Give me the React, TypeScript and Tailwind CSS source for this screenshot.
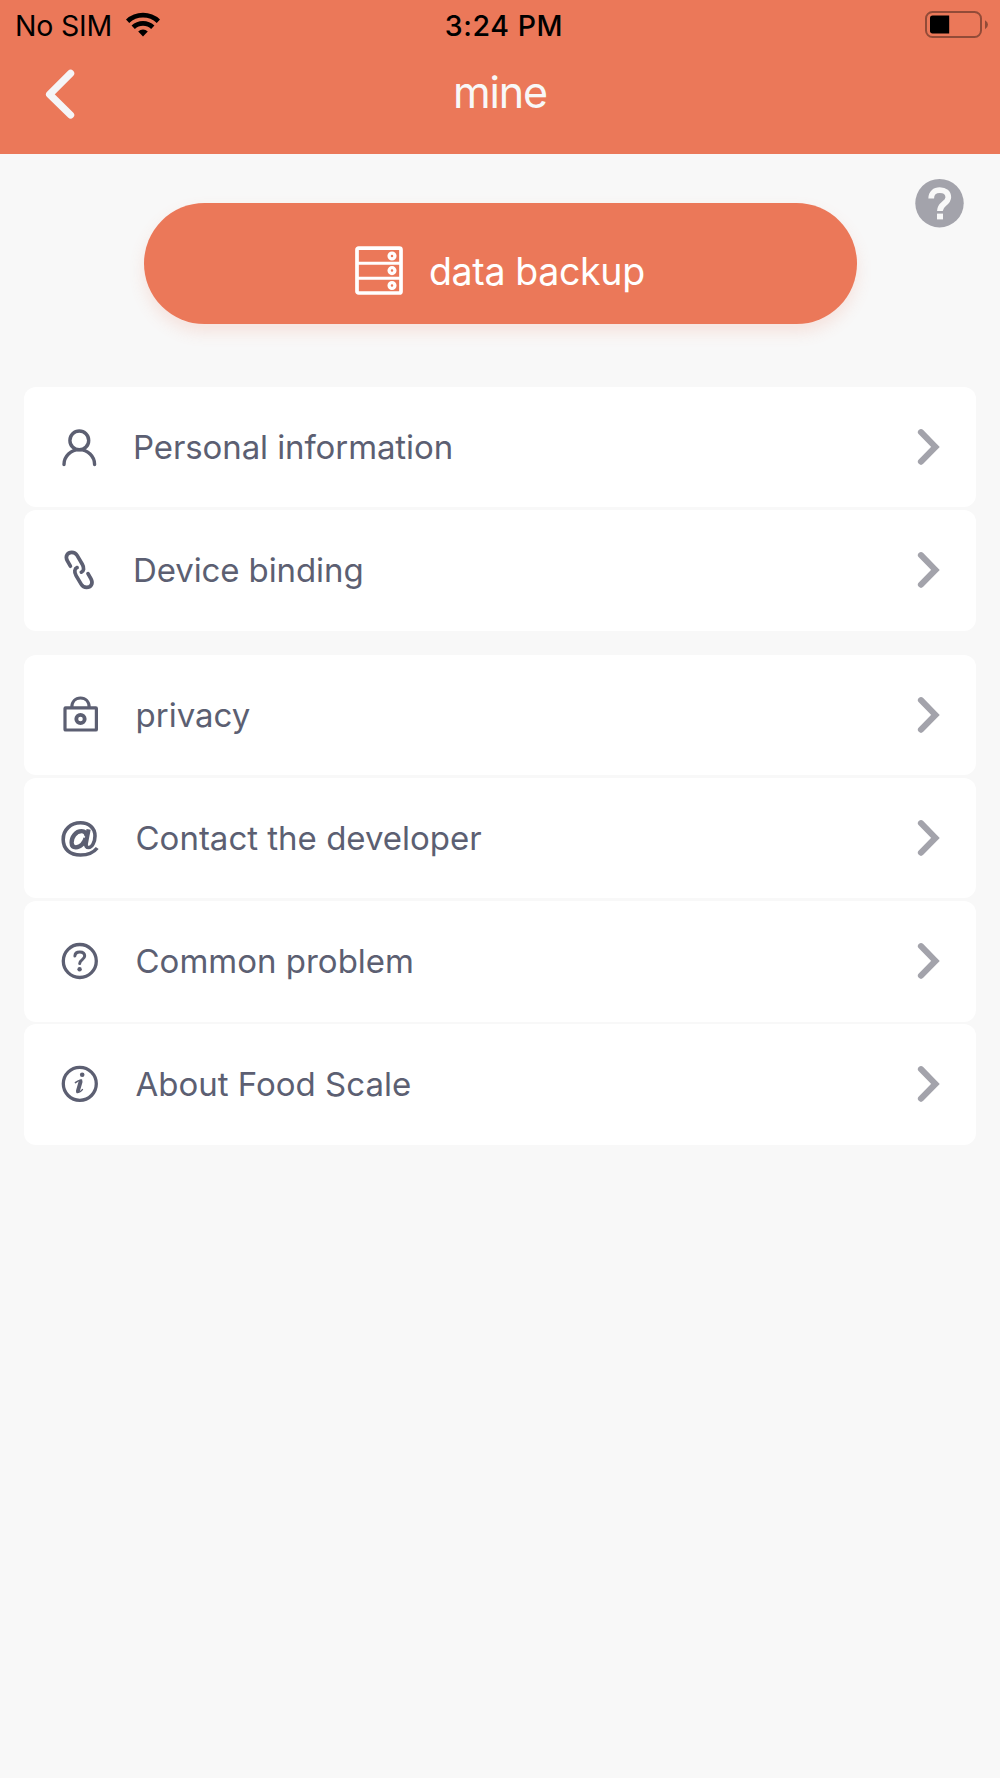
import type { ReactNode } from "react";

type MenuEntry = {
  id: string;
  label: string;
  icon: ReactNode;
};

type MenuGroup = {
  id: string;
  labelClass: string;
  items: MenuEntry[];
};

const PersonIcon = () => (
  <svg className="w-10 h-10" viewBox="0 0 40 40" fill="none" stroke="currentColor" strokeWidth={3.4} strokeLinecap="round">
    <circle cx="19.3" cy="13.4" r="9.4" />
    <path d="M4 37.5A15.3 14.9 0 0 1 34.6 37.5" />
  </svg>
);

const LinkIcon = () => {
  const half = "M10.4 16.2L7.4 10.9C4.7 6 7.8 2.4 11.8 2.4C14.3 2.4 16 3.6 17.1 5.4L22.3 14.2C24.4 17.8 23.9 21.2 21.3 22.2";
  return (
    <svg className="w-10 h-10" viewBox="0 0 40 40" fill="none" stroke="currentColor" strokeWidth={3.7} strokeLinecap="round">
      <path d={half} />
      <path d={half} transform="rotate(180 19.2 19.9)" />
    </svg>
  );
};

const LockIcon = () => (
  <svg className="w-10 h-10" viewBox="0 0 40 40" fill="none" stroke="currentColor" strokeWidth={3.2} strokeLinejoin="round">
    <rect x="5" y="12.8" width="31.4" height="22.2" rx="0.6" />
    <path d="M11.8 12.5C11.8 6.5 15.5 3 20.5 3S29.2 6.5 29.2 12.5" />
    <circle cx="20.5" cy="24" r="4.2" strokeWidth={3.8} />
  </svg>
);

const AtIcon = () => (
  <svg className="w-10 h-10" viewBox="0 0 40 40" fill="none" stroke="currentColor" strokeWidth={3.6}>
    <path d="M37.2 30C33.3 35 27 37 20.5 37C10 37 3.2 31 3.2 21.5C3.2 11.5 11 4.8 20.5 4.8C29 4.8 35 10 35 18C35 24 32 29.5 28.6 29.5C26.4 29.5 25.6 28 26.1 25.8" />
    <path d="M28.6 11.3L25.4 28" strokeWidth={4.2} />
    <path d="M26.6 18C26.2 14.6 24.3 13.2 21.6 13.2C15.6 13.2 11.6 19 11.6 24.5C11.6 27.9 13.1 29.3 15.8 29.3C20.5 29.3 24.5 25 25.6 20" strokeWidth={4.3} />
  </svg>
);

const QuestionIcon = () => (
  <svg className="w-10 h-10" viewBox="0 0 40 40" fill="none" stroke="currentColor" strokeWidth={3.3}>
    <circle cx="19.8" cy="20" r="16.5" />
    <path d="M14.9 15C15 12.4 17 11 19.8 11C22.6 11 24.7 12.5 24.7 15.1C24.7 18.7 19.7 18.6 19.7 22.6" strokeWidth={3} strokeLinecap="round" />
    <circle cx="19.6" cy="28.2" r="2.2" fill="currentColor" stroke="none" />
  </svg>
);

const InfoIcon = () => (
  <svg className="w-10 h-10" viewBox="0 0 40 40" fill="none" stroke="currentColor" strokeWidth={3.3}>
    <circle cx="19.8" cy="19.8" r="16.5" />
    <circle cx="22.2" cy="10.8" r="2.3" fill="currentColor" stroke="none" />
    <path d="M20.6 17.6L17.9 27" strokeWidth={3.9} strokeLinecap="round" />
    <path d="M15.4 18.6Q18 16.2 21.5 15.9M17 28.5Q19.6 29.2 22.4 25.6" strokeWidth={1.5} strokeLinecap="round" />
  </svg>
);

const menuGroups: MenuGroup[] = [
  {
    id: "account",
    labelClass: "ml-[33px] tracking-[-0.1px]",
    items: [
      { id: "personal", label: "Personal information", icon: <PersonIcon /> },
      { id: "device", label: "Device binding", icon: <LinkIcon /> },
    ],
  },
  {
    id: "support",
    labelClass: "ml-[35.5px]",
    items: [
      { id: "privacy", label: "privacy", icon: <LockIcon /> },
      { id: "contact", label: "Contact the developer", icon: <AtIcon /> },
      { id: "problem", label: "Common problem", icon: <QuestionIcon /> },
      { id: "about", label: "About Food Scale", icon: <InfoIcon /> },
    ],
  },
];

function StatusBar() {
  return (
    <div className="grid grid-cols-3 items-center h-[50px] pl-[15px] pr-3 text-black text-[28.5px] leading-none">
      <div className="flex items-center gap-[13.5px]">
        <span className="pt-[2px] tracking-[-0.2px]">No SIM</span>
        <svg className="w-[34px] h-[26px]" viewBox="0 0 34 26" fill="none" stroke="currentColor" strokeWidth={4.8}>
          <path d="M1.6 9.2A22.5 22.5 0 0 1 32.4 9.2" />
          <path d="M7.2 15.2A14.3 14.3 0 0 1 26.8 15.2" />
          <path d="M12.2 19.4A7.2 7.2 0 0 1 21.8 19.4L17 24.6Z" fill="currentColor" stroke="none" />
        </svg>
      </div>
      <span className="justify-self-center pt-[2px] pl-[5px] font-medium tracking-[0.6px]">3:24 PM</span>
      <svg className="w-[63px] h-7 justify-self-end" viewBox="0 0 63 28">
        <rect x="1" y="1" width="55" height="25" rx="6.5" fill="none" stroke="#924b38" strokeWidth="2" />
        <path d="M7.6 4.4H24.2V22.4H7.6Q5 22.4 5 19.8V7Q5 4.4 7.6 4.4Z" fill="black" />
        <path d="M60 9.2Q63 10.9 63 13.6T60 18.2Z" fill="#924b38" />
      </svg>
    </div>
  );
}

function Header() {
  return (
    <header className="h-[154.3px] bg-[#eb7859]">
      <StatusBar />
      <div className="grid grid-cols-[1fr_auto_1fr] items-center h-[88px] px-[42px] text-[#f8f8f8]">
        <button aria-label="back" className="justify-self-start">
          <svg className="w-9 h-[50px]" viewBox="0 0 36 50" fill="none" stroke="#f5f5f7" strokeWidth={7.2} strokeLinecap="round" strokeLinejoin="round">
            <path d="M28.6 4.4L7.6 25.4L28.6 46" />
          </svg>
        </button>
        <h1 className="pb-[3px] text-[43px] leading-none tracking-[-1.2px]">mine</h1>
      </div>
    </header>
  );
}

function BackupBar() {
  return (
    <div className="grid grid-cols-[144px_713px_1fr] pt-[24.7px]">
      <button className="col-start-2 mt-6 h-[121px] rounded-full bg-[#eb7859] text-white flex items-center pt-[14px] pl-[211px] shadow-[0_8px_16px_rgba(236,121,90,0.16)]">
        <svg className="w-12 h-[49px] shrink-0" viewBox="0 0 48 49" fill="none" stroke="currentColor" strokeWidth={3.7}>
          <rect x="2" y="2.2" width="44" height="44.8" rx="1.6" />
          <path d="M2 17.2H46M2 32.2H46" strokeWidth={2.9} />
          <circle cx="37" cy="10" r="2.9" strokeWidth={3.3} />
          <circle cx="37" cy="24.6" r="2.9" strokeWidth={3.3} />
          <circle cx="37" cy="39.5" r="2.9" strokeWidth={3.3} />
        </svg>
        <span className="ml-[26px] pt-[2px] text-[37.5px] leading-none tracking-[-0.35px]">data backup</span>
      </button>
      <svg className="w-[49px] h-[49px] justify-self-end mr-9" viewBox="0 0 49 49" fill="none">
        <circle cx="24.5" cy="24.2" r="24.2" fill="#a3a3ab" />
        <path d="M16.2 19.4C16.2 14 19.8 11.1 24.8 11.1C30 11.1 33.3 13.8 33.3 18.2C33.3 24.6 24.9 24.6 24.9 32" stroke="#f8f8f8" strokeWidth={5.7} />
        <path d="M22 34.6H28V40.4H22Z" fill="#f8f8f8" />
      </svg>
    </div>
  );
}

function MenuRow({ item, labelClass }: { item: MenuEntry; labelClass: string }) {
  return (
    <li className="flex items-center h-[120.5px] pl-9 pr-9 rounded-xl bg-white text-[#5c5f72]">
      {item.icon}
      <span className={`${labelClass} pt-px text-[33px] leading-none`}>{item.label}</span>
      <svg className="w-6 h-10 ml-auto" viewBox="0 0 24 40" fill="none" stroke="#a3a3ab" strokeWidth={6.2} strokeLinecap="round">
        <path d="M5 5.2L19.4 19.9L5 34.6" />
      </svg>
    </li>
  );
}

export default function App() {
  return (
    <div className="w-[1000px] h-[1778px] overflow-hidden bg-[#f8f8f8] font-['Inter','Liberation_Sans',sans-serif]">
      <Header />
      <BackupBar />
      <nav className="mt-[63px] px-6 flex flex-col gap-6">
        {menuGroups.map((group) => (
          <ul key={group.id} className="flex flex-col gap-[2.7px]">
            {group.items.map((item) => (
              <MenuRow key={item.id} item={item} labelClass={group.labelClass} />
            ))}
          </ul>
        ))}
      </nav>
    </div>
  );
}
